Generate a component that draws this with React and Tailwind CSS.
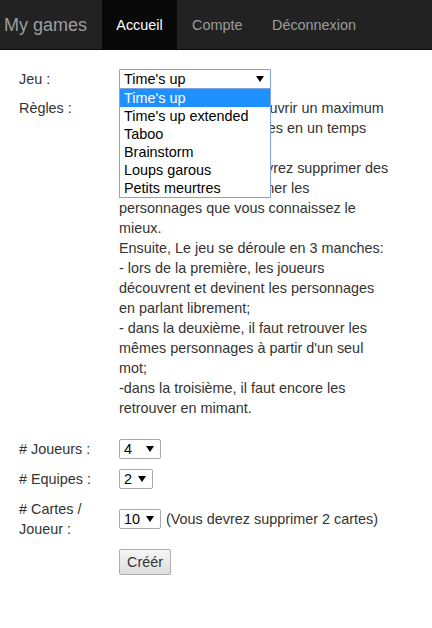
import React from "react";

function Arrow() {
  return (
    <svg width="8" height="6" viewBox="0 0 8 6" className="shrink-0">
      <path d="M0 0 L8 0 L4 6 Z" fill="#000" />
    </svg>
  );
}

function Select({ value, width, focused }) {
  return (
    <div
      className={
        "flex items-center justify-between h-[20px] bg-white pl-[4px] pr-[6px] text-[14.4px] leading-[18px] text-black " +
        (focused ? "border border-[#7ea4e4] rounded-[1px]" : "border border-[#a9a9a9] rounded-[2px]")
      }
      style={{ width }}
    >
      <span>{value}</span>
      <Arrow />
    </div>
  );
}

const options = ["Time's up", "Time's up extended", "Taboo", "Brainstorm", "Loups garous", "Petits meurtres"];

export default function App() {
  return (
    <div className="min-h-[628px] bg-white text-[#333] text-[14.4px] leading-[20px]" style={{ fontFamily: '"Liberation Sans", Arial, sans-serif' }}>
      <nav className="flex h-[50px] bg-[#222] border-b border-[#080808]">
        <div className="w-[102px] pl-[4px] flex items-center text-[18px] text-[#9d9d9d]">My games</div>
        <div className="w-[75px] flex items-center justify-center bg-[#080808] text-white">Accueil</div>
        <div className="pl-[15px] w-[95px] flex items-center text-[#9d9d9d]">Compte</div>
        <div className="flex items-center text-[#9d9d9d]">Déconnexion</div>
      </nav>

      <div className="pl-[19px] pt-[19px] flex flex-col">
        <div className="flex items-center">
          <div className="w-[100px]">Jeu :</div>
          <div className="relative">
            <Select value="Time's up" width={152} focused />
            <div className="absolute left-0 top-[19px] z-10 w-[152px] bg-white border border-[#7ea4e4] text-black text-[14.4px] leading-[18px]">
              {options.map((o, i) => (
                <div key={o} className={"h-[18px] pl-[4px] " + (i === 0 ? "bg-[#1e90ff] text-white" : "")}>
                  {o}
                </div>
              ))}
            </div>
          </div>
        </div>

        <div className="flex mt-[9px]">
          <div className="w-[100px] shrink-0">Règles :</div>
          <div className="w-[272px]">
            Le but est de faire découvrir un maximum de personnalités célèbres en un temps limité.
            <br />
            Avant de jouer vous devrez supprimer des cartes afin de sélectionner les personnages que vous connaissez le mieux.
            <br />
            Ensuite, Le jeu se déroule en 3 manches:
            <br />
            - lors de la première, les joueurs découvrent et devinent les personnages en parlant librement;
            <br />
            - dans la deuxième, il faut retrouver les mêmes personnages à partir d'un seul mot;
            <br />
            -dans la troisième, il faut encore les retrouver en mimant.
          </div>
        </div>

        <div className="flex items-center mt-[21px]">
          <div className="w-[100px]"># Joueurs :</div>
          <Select value="4" width={42} />
        </div>

        <div className="flex items-center mt-[10px]">
          <div className="w-[100px]"># Equipes :</div>
          <Select value="2" width={34} />
        </div>

        <div className="flex items-center mt-[10px]">
          <div className="w-[100px] pr-[20px]"># Cartes / Joueur :</div>
          <Select value="10" width={42} />
          <span className="ml-[5px]">(Vous devrez supprimer 2 cartes)</span>
        </div>

        <div className="flex mt-[10px]">
          <div className="w-[100px]" />
          <button className="h-[26px] w-[52px] border border-[#adadad] rounded-[2px] bg-gradient-to-b from-[#f6f6f6] to-[#dddddd] text-[#333] text-[14.4px]">
            Créér
          </button>
        </div>
      </div>
    </div>
  );
}
